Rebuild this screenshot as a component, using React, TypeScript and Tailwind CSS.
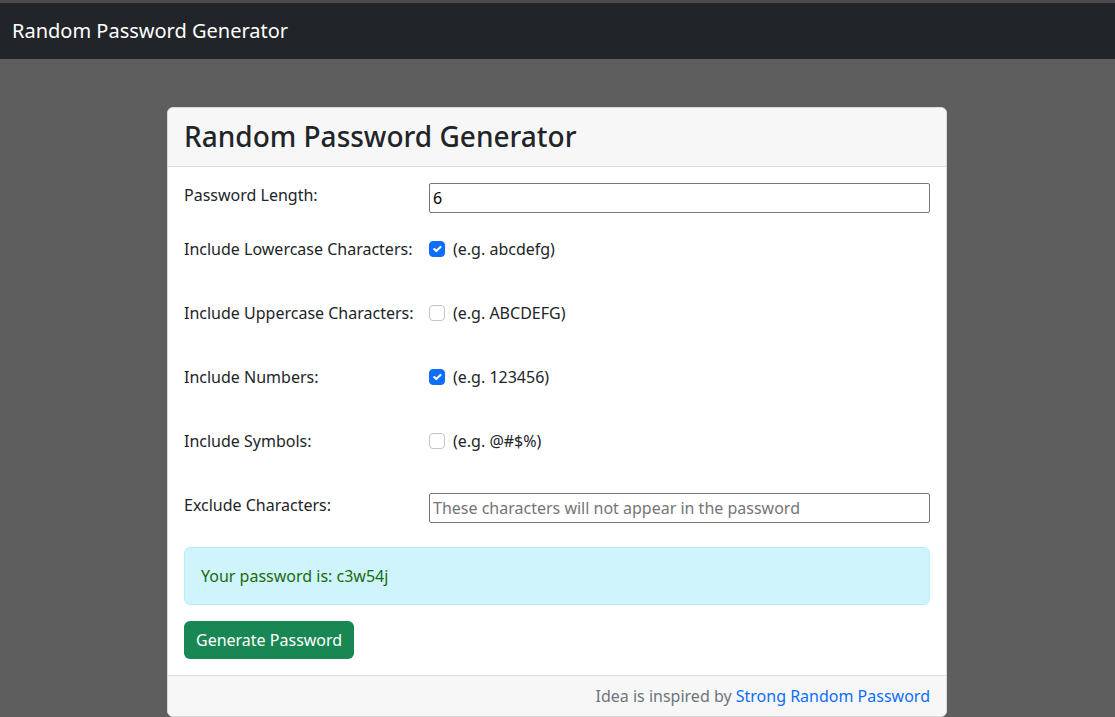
import React from "react";

const font = { fontFamily: '"Noto Sans", "Open Sans", sans-serif' };

function Check({ checked }: { checked: boolean }) {
  if (checked) {
    return (
      <span className="w-4 h-4 rounded-[4px] bg-[#0d6efd] border border-[#0d6efd] flex items-center justify-center shrink-0">
        <svg viewBox="0 0 20 20" className="w-4 h-4">
          <path d="M6 10l3 3l6-6" fill="none" stroke="#fff" strokeWidth="3" strokeLinecap="round" strokeLinejoin="round" />
        </svg>
      </span>
    );
  }
  return <span className="w-4 h-4 rounded-[4px] bg-white border border-[#c4c4c4] shrink-0" />;
}

function CheckRow({ label, hint, checked }: { label: string; hint: string; checked: boolean }) {
  return (
    <div className="flex h-6 items-center">
      <div className="w-[245px] text-[16px] leading-6 text-[#212529]">{label}</div>
      <div className="flex items-center gap-2">
        <Check checked={checked} />
        <span className="text-[16px] leading-6 text-[#212529]">{hint}</span>
      </div>
    </div>
  );
}

export default function App() {
  return (
    <div className="min-h-[717px] bg-[#5e5e5e]" style={font}>
      <div className="h-[3px] bg-[#4b4b4b]" />
      <div className="h-[56px] bg-[#212529] flex items-center px-3">
        <span className="text-white text-[20px] leading-[30px]">Random Password Generator</span>
      </div>
      <div className="pt-[48px] pr-[1px]">
        <div className="w-[780px] mx-auto bg-white border border-[#d9d9d9] rounded-[6px] overflow-hidden">
          <div className="bg-[#f7f7f7] border-b border-[#dcdcdc] px-4 pt-[11px] h-[59px]">
            <h3 className="text-[28px] leading-[34px] font-medium text-[#212529]">Random Password Generator</h3>
          </div>
          <div className="p-4 flex flex-col">
            <div className="flex items-start h-[30px]">
              <div className="w-[245px] text-[16px] leading-6 text-[#212529]">Password Length:</div>
              <div className="flex-1 h-[30px] border border-[#767676] rounded-[2px] px-[3px] flex items-center text-[16px] text-black">6</div>
            </div>
            <div className="flex flex-col gap-[40px] mt-[24px]">
              <CheckRow label="Include Lowercase Characters:" hint="(e.g. abcdefg)" checked={true} />
              <CheckRow label="Include Uppercase Characters:" hint="(e.g. ABCDEFG)" checked={false} />
              <CheckRow label="Include Numbers:" hint="(e.g. 123456)" checked={true} />
              <CheckRow label="Include Symbols:" hint="(e.g. @#$%)" checked={false} />
              <div className="flex items-start h-[30px]">
                <div className="w-[245px] text-[16px] leading-6 text-[#212529]">Exclude Characters:</div>
                <div className="flex-1 h-[30px] border border-[#767676] rounded-[2px] px-[3px] flex items-center text-[16px] text-[#757575]">
                  These characters will not appear in the password
                </div>
              </div>
            </div>
            <div className="mt-[24px] h-[58px] bg-[#cff4fc] border border-[#b6effb] rounded-[6px] px-4 flex items-center text-[16px] text-[#1a6b0e]">
              Your password is: c3w54j
            </div>
            <div className="mt-[16px]">
              <button className="h-[38px] px-3 bg-[#198754] text-white text-[16px] rounded-[6px]">Generate Password</button>
            </div>
          </div>
          <div className="bg-[#f7f7f7] border-t border-[#dcdcdc] px-4 py-2 text-right text-[16px] leading-6">
            <span className="text-[#6c757d]">Idea is inspired by </span>
            <span className="text-[#0d6efd]">Strong Random Password</span>
          </div>
        </div>
      </div>
    </div>
  );
}
